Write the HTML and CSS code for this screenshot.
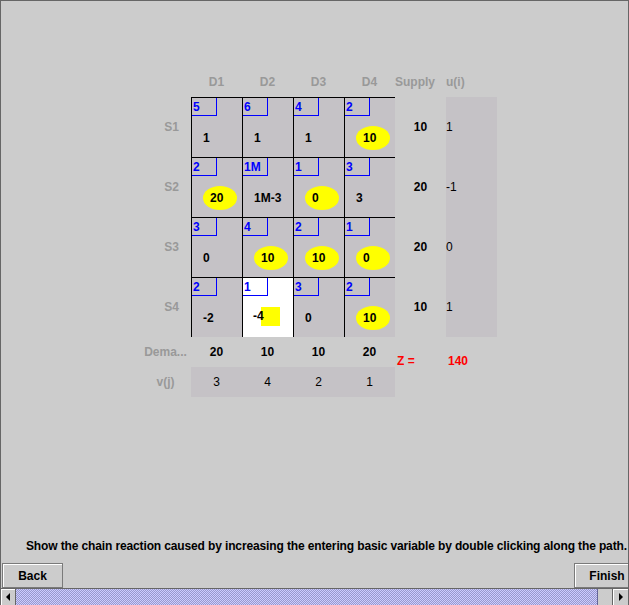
FILE: index.html
```html
<!DOCTYPE html>
<html>
<head>
<meta charset="utf-8">
<link rel="stylesheet" href="styles.css">
</head>
<body>
<div class="frame">
  <div class="main">
    <div class="grid">
      <div class="head"></div>
      <div class="head">D1</div>
      <div class="head">D2</div>
      <div class="head">D3</div>
      <div class="head">D4</div>
      <div class="head left">Supply</div>
      <div class="head left">u(i)</div>

      <div class="rowhead s">S1</div>
      <div class="cell"><div class="cost">5</div><div class="val"><span class="num">1</span></div></div>
      <div class="cell"><div class="cost">6</div><div class="val"><span class="num">1</span></div></div>
      <div class="cell"><div class="cost">4</div><div class="val"><span class="num">1</span></div></div>
      <div class="cell"><div class="cost">2</div><div class="val"><span class="basic">10</span></div></div>
      <div class="supply">10</div>
      <div class="u">1</div>

      <div class="rowhead s">S2</div>
      <div class="cell"><div class="cost">2</div><div class="val"><span class="basic">20</span></div></div>
      <div class="cell"><div class="cost">1M</div><div class="val"><span class="num">1M-3</span></div></div>
      <div class="cell"><div class="cost">1</div><div class="val"><span class="basic">0</span></div></div>
      <div class="cell"><div class="cost">3</div><div class="val"><span class="num">3</span></div></div>
      <div class="supply">20</div>
      <div class="u">-1</div>

      <div class="rowhead s">S3</div>
      <div class="cell"><div class="cost">3</div><div class="val"><span class="num">0</span></div></div>
      <div class="cell"><div class="cost">4</div><div class="val"><span class="basic">10</span></div></div>
      <div class="cell"><div class="cost">2</div><div class="val"><span class="basic">10</span></div></div>
      <div class="cell"><div class="cost">1</div><div class="val"><span class="basic">0</span></div></div>
      <div class="supply">20</div>
      <div class="u">0</div>

      <div class="rowhead s">S4</div>
      <div class="cell"><div class="cost">2</div><div class="val"><span class="num">-2</span></div></div>
      <div class="cell active"><div class="cost">1</div><div class="val"><span class="enter">-4</span></div></div>
      <div class="cell"><div class="cost">3</div><div class="val"><span class="num">0</span></div></div>
      <div class="cell"><div class="cost">2</div><div class="val"><span class="basic">10</span></div></div>
      <div class="supply">10</div>
      <div class="u">1</div>

      <div class="rowhead">Dema...</div>
      <div class="dem">20</div>
      <div class="dem">10</div>
      <div class="dem">10</div>
      <div class="dem">20</div>
      <div class="z z1">Z =</div>
      <div class="z z2">140</div>

      <div class="rowhead">v(j)</div>
      <div class="vj">3</div>
      <div class="vj">4</div>
      <div class="vj">2</div>
      <div class="vj">1</div>
    </div>
  </div>
  <div class="instr">Show the chain reaction caused by increasing the entering basic variable by double clicking along the path.</div>
  <div class="buttons">
    <button class="btn back">Back</button>
    <button class="btn finish">Finish</button>
  </div>
  <div class="hscroll">
    <div class="arrow"><svg width="4" height="8" viewBox="0 0 4 8"><polygon points="4,0 0,4 4,8" fill="#000"/></svg></div>
    <div class="thumb"></div>
    <div class="track"></div>
    <div class="arrow right"><svg width="4" height="8" viewBox="0 0 4 8"><polygon points="0,0 4,4 0,8" fill="#000"/></svg></div>
  </div>
</div>
</body>
</html>
```

FILE: styles.css
```css
* {
  box-sizing: border-box;
  margin: 0;
  padding: 0;
}

html, body {
  background: #cccccc;
}

body {
  margin: 0;
  font-family: "Liberation Sans", Arial, sans-serif;
  font-size: 12px;
  font-weight: bold;
  color: #000;
}

.frame {
  width: 629px;
  height: 605px;
  border-top: 1px solid #666;
  border-left: 1px solid #666;
  border-right: 1px solid #666;
  overflow: hidden;
  display: flex;
  flex-direction: column;
  background: #cccccc;
}

.main {
  flex: 1;
  padding: 66px 0 0 139px;
}

.grid {
  display: grid;
  grid-template-columns: repeat(7, 51px);
  grid-template-rows: 30px repeat(4, 60px) 30px 30px;
}

.head {
  color: #999;
  display: flex;
  align-items: center;
  justify-content: center;
}

.head.left {
  justify-content: flex-start;
}

.rowhead {
  color: #999;
  display: flex;
  align-items: center;
  justify-content: center;
}

.rowhead.s {
  justify-content: flex-end;
  padding-right: 12px;
}

.cell {
  border-left: 1px solid #000;
  border-top: 1px solid #000;
  background: #c5c2c6;
  display: flex;
  flex-direction: column;
}

.cell.active {
  background: #ffffff;
}

.cost {
  width: 25px;
  height: 18px;
  border-right: 1px solid #0000ff;
  border-bottom: 1px solid #0000ff;
  color: #0000ff;
  padding: 1px 0 0 1px;
  line-height: 16px;
}

.val {
  flex: 1;
  display: flex;
  align-items: flex-start;
  padding: 10px 0 0 11px;
}

.num {
  line-height: 24px;
}

.basic {
  display: block;
  width: 34px;
  height: 24px;
  border-radius: 50%;
  background: #ffff00;
  padding-left: 7px;
  line-height: 24px;
}

.enter {
  display: block;
  width: 19px;
  height: 19px;
  margin: 1px 0 0 7px;
  background: #ffff00;
  text-indent: -8px;
  line-height: 19px;
  white-space: nowrap;
}

.supply {
  display: flex;
  align-items: center;
  justify-content: center;
}

.u {
  background: #c5c2c6;
  display: flex;
  align-items: center;
  font-weight: normal;
}

.dem {
  display: flex;
  align-items: center;
  justify-content: center;
}

.vj {
  background: #c5c2c6;
  font-weight: normal;
  display: flex;
  align-items: center;
  justify-content: center;
}

.z {
  grid-row: 6 / 8;
  color: #ff0000;
  padding: 15px 0 0 2px;
  line-height: 18px;
}

.z1 {
  grid-column: 6;
}

.z2 {
  grid-column: 7;
}

.instr {
  height: 16px;
  line-height: 16px;
  margin-bottom: 9px;
  padding-left: 25px;
  white-space: nowrap;
  letter-spacing: -0.13px;
}

.buttons {
  height: 25px;
  display: flex;
  justify-content: space-between;
  margin-right: -12px;
}

.btn {
  height: 25px;
  font-family: inherit;
  font-size: 12px;
  font-weight: bold;
  color: #000;
  background: #cccccc;
  border: 1px solid #7a7a7a;
  box-shadow: inset 1px 1px 0 #ffffff;
  padding: 0;
}

.back {
  width: 61px;
  margin-left: 1px;
}

.finish {
  width: 66px;
}

.hscroll {
  height: 17px;
  display: flex;
  border-top: 1px solid #666;
}

.arrow {
  width: 15px;
  background: #cccccc;
  border-right: 1px solid #666;
  box-shadow: inset 1px 1px 0 #ffffff;
  display: flex;
  align-items: center;
  justify-content: center;
}

.arrow.right {
  width: 16px;
  border-right: 0;
  border-left: 1px solid #666;
}

.thumb {
  width: 582px;
  border-right: 1px solid #666699;
  background-color: #aaaadd;
  background-image: repeating-conic-gradient(#ccccff 0 25%, #9999cc 0 50%);
  background-size: 2px 2px;
}

.track {
  flex: 1;
  background: #cccccc;
}
```
